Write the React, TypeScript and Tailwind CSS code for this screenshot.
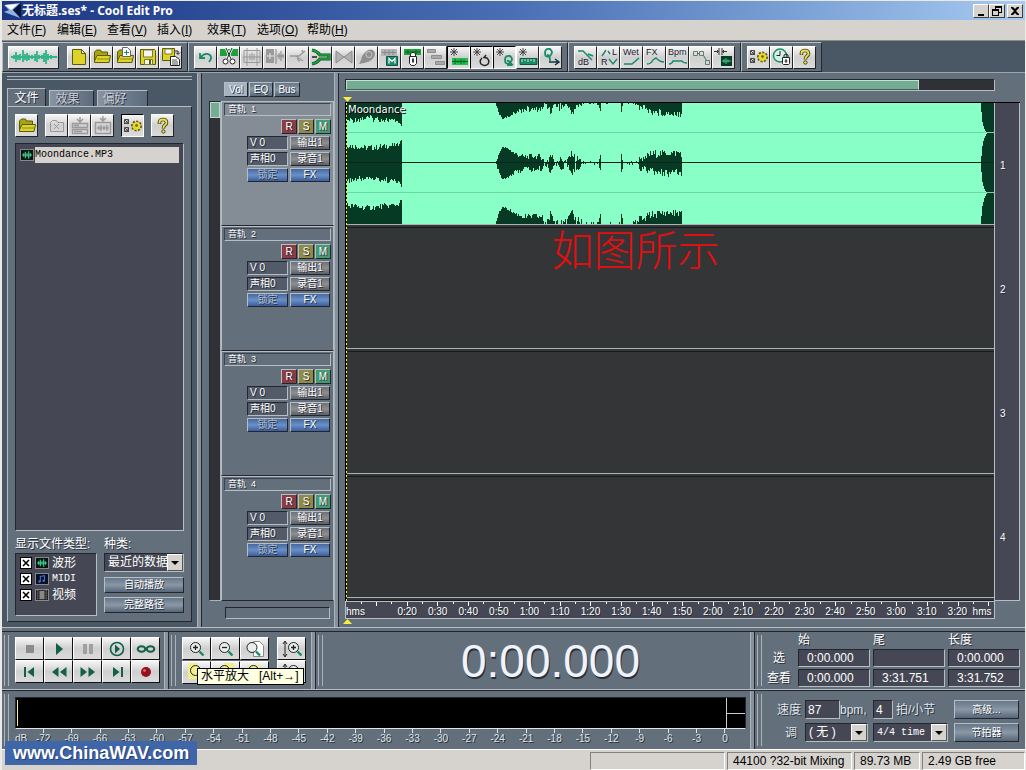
import React from "react";

const SANS = "font-['Liberation_Sans','Noto_Sans_CJK_SC',sans-serif]";
const MONO = "font-['Liberation_Mono','Noto_Sans_CJK_SC',monospace]";
const SHADOW = "[text-shadow:1px_1px_0_#2a2f3a]";
const SUNKEN = "border border-t-[#23262e] border-l-[#23262e] border-r-[#b4bec3] border-b-[#b4bec3]";
const RAISED = "border border-t-[#b4bec3] border-l-[#b4bec3] border-r-[#23262e] border-b-[#23262e]";
const FACE = "bg-linear-to-b from-[#f6f6f6] via-[#cfcfcf] to-[#dcdcdc]";
const STEEL = "bg-linear-to-b from-[#66788a] via-[#8a97a5] to-[#56677a]";

type Kids = { children?: React.ReactNode };

/* ---------- icons ---------- */

function Ico({ children, w = 20 }: Kids & { w?: number }) {
  return (
    <svg width={w} height="20" viewBox={`0 0 ${w} 20`} fill="none" stroke="#222" aria-hidden="true" className="block shrink-0">
      {children}
    </svg>
  );
}

const G = "#9a9a9a";
const T = "#178a68";

const Folder = () => (
  <>
    <path d="M2.500 14V5l2-2h4l1 2h6v3" fill="#a8a312" stroke="#5d5a0a" />
    <path d="M2.500 15.500V14L5 8.500h13.500l-1.500 7z" fill="#dcd42a" stroke="#5d5a0a" />
    <path d="M5 12h12" stroke="#8f8a18" />
  </>
);
const Floppy = () => (
  <>
    <path d="M2.500 2.500h14l1 1v14h-15z" fill="#dcd42a" stroke="#5d5a0a" />
    <path d="M5.500 3h9v7h-9zM6.500 12.500h8v5h-8z" fill="#f4f4f4" stroke="#807c20" />
    <path d="M12 13v4" stroke="#5d5a0a" strokeWidth="2" />
  </>
);
const Star = () => <path d="M5 1v8M1 5h8M2 2l6 6M8 2L2 8" stroke="#333" strokeWidth="0.9" />;
const Gear = () => (
  <>
    <path d="M1.500 3.500h4v4h-4zM1.500 11.500h4v4h-4zM2 4l3.500 3.500M5.500 4L2 7.500M2 12l3.500 3.500M5.500 12L2 15.500" stroke="#222" strokeWidth="0.8" />
    <circle cx="13.500" cy="10" r="4.500" fill="#e8d82c" stroke="#5d5a0a" strokeWidth="2" strokeDasharray="2 1.400" />
    <circle cx="13.500" cy="10" r="3.800" fill="#e8d82c" stroke="none" />
    <circle cx="13.500" cy="9.500" r="1.300" fill="#5d5a0a" stroke="none" />
  </>
);
const Help = () => (
  <>
    <path d="M6.500 8V6q0-2.500 3.500-2.500T13.500 6.500Q13.500 8 12 9t-1.600 3.500" stroke="#4a470c" strokeWidth="3.600" />
    <path d="M6.500 7.500V6q0-2.500 3.500-2.500T13.500 6.500Q13.500 8 12 9t-1.600 3" stroke="#e8df5a" strokeWidth="1.800" />
    <circle cx="10.400" cy="15.500" r="1.700" fill="#e8df5a" stroke="#4a470c" />
  </>
);
const MiniWave = () => (
  <path d="M1 6h12M3 4v4M5 2v8M7 4v4M9 1.500v9M11 4v4" stroke="#3fc98d" strokeWidth="1.400" />
);

const fileIcons = [
  ["新建", <path d="M3.500 2.500h9l4 4v11h-13zM12.500 2.500v4h4" fill="#dcd42a" stroke="#5d5a0a" />],
  ["打开", <Folder />],
  ["添加", <><Folder /><path d="M7.500 .5h5l3 3v6h-8z" fill="#fff" stroke="#666" /><path d="M11.500 3v5M9 5.500h5" stroke={T} /></>],
  ["保存", <Floppy />],
  ["全部保存", <><path d="M1.500 1.500h12v12h-12z" fill="#dcd42a" stroke="#5d5a0a" /><path d="M4 2h7v5H4z" fill="#fff" stroke="#807c20" /><path d="M14 4h3v3M15 5.500l2 2 2-2" /><path d="M9.500 9.500h5l4 3v6h-9z" fill="#fff" /><path d="M11 13h5M11 15h6M11 17h6" strokeWidth="0.8" /></>],
] as const;

const editIcons: readonly (readonly [string, React.ReactNode, boolean?])[] = [
  ["撤消", <path d="M4 6v5h5M4.500 10.500Q9 5 14 8q2.500 3-1 7" stroke={T} strokeWidth="1.800" />],
  ["剪切", <><path d="M1 2h18v7H1z" fill="#1fa03e" stroke="none" /><path d="M7 1l5 11M13 1L8 12" stroke="#fff" strokeWidth="2.600" /><path d="M7 1l5 11M13 1L8 12" /><circle cx="6.500" cy="14.500" r="2.500" fill="#fff" /><circle cx="13.500" cy="14.500" r="2.500" fill="#fff" /></>],
  ["裁剪", <path d="M2 3.500h16v12H2zM5 1v18M15 1v18M1 10h18M8 7v6M10 5.500v8M12 7v6" stroke={G} />],
  ["分割", <><path d="M1 2h8v14H1z" fill={G} stroke="none" /><path d="M3 9h6M5 6v6M11 2v15M12 9h7M14 6v6M16 4v10M18 7v4" stroke="#858585" /><path d="M2 9h7M5 6v6" stroke="#eee" /></>],
  ["合并", <path d="M2 9h9l6-5M8 9l7 5M10 9q-1 5 2 5M14 3l1 3" stroke={G} strokeWidth="1.500" />],
  ["混合", <><path d="M1 3q5 1 8 5h9v4H9q-3 4-8 5" stroke="#0c5e24" strokeWidth="3.200" /><path d="M1 3q5 1 8 5h9v4H9q-3 4-8 5" stroke="#1fa03e" strokeWidth="1.600" /><path d="M1 10h5" stroke="#222" strokeWidth="1.500" /></>],
  ["淡化", <path d="M2 4l8 6-8 6zM18 4l-8 6 8 6z" fill="#b0b0b0" stroke="#8c8c8c" />],
  ["标记", <><path d="M4 13l-2 4 5-1q10-2 11-9-1-6-7-4-6 4-7 10z" fill="#8f8f8f" stroke="none" /><circle cx="12" cy="7.500" r="3" stroke="#c5c5c5" /></>],
  ["静音", <><path d="M1 2h16v7H1z" fill="#b4b4b4" stroke="none" /><path d="M2 5.500h14M5 3v5M9 3v5M13 3v5" stroke="#888" /><path d="M6.500 9.500h11v9h-11z" fill="#1c8a6a" stroke="#0c5a42" /><path d="M9 16.500v-5l3 3 3-3v5" stroke="#fff" strokeWidth="1.200" /></>],
  ["锁定", <><path d="M1 2h17v6H1z" fill="#1fa03e" stroke="none" /><path d="M2 5h15M5 3v4M13 3v4" stroke="#0c5e24" /><path d="M7.500 10V7q2.500-3.500 5 0v3" fill="#fff" /><path d="M6.500 9.500h7v7l-2 2h-3l-2-2z" fill="#fff" /><path d="M10 11.500v4" strokeWidth="1.800" /></>],
  ["分组", <path d="M1.500 2.500h8v3h-8zM5.500 8.500h10v3h-10zM9.500 14.500h9v3h-9z" fill="#aaa" stroke="#8c8c8c" />],
  ["对齐波形", <><Star /><path d="M3 11h16v7H3z" fill="#1fc04e" stroke="none" /><path d="M3 14.500h16M6 12v5M9 13v3M12 12v5M15 12.500v4" stroke="#0c5e24" /></>, true],
  ["对齐循环", <><Star /><path d="M10 11q-3 3-1 6 4 3 7 0 2-3-1-6l-3-.5 2-2.500" strokeWidth="1.400" /></>, true],
  ["对齐标记", <><Star /><path d="M15 9q-5-1-5 4t5 3q4-4 0-7zM12 14q2-1 3 2l3 2M12 18h5" stroke={T} strokeWidth="1.800" /></>, true],
  ["对齐标尺", <><Star /><path d="M2 11.500h17v6H2z" fill="#1c8a6a" stroke="#0c5a42" /><path d="M4 12v3M7 12v2M10 12v3M13 12v2M16 12v3" stroke="#bff0d8" /></>],
  ["提示列表", <><path d="M9 2Q4 1 4 6t5 3q4-4 0-7zM6 8q3 0 3 6" stroke={T} strokeWidth="1.800" /><path d="M8 15h9M14 12l4 3-4 3" stroke="#134" strokeWidth="1.500" /></>],
];

const Lbl = ({ x, y, s = 9, children }: { x: number; y: number; s?: number; children: string }) => (
  <text x={x} y={y} fontSize={s} fill="#223" stroke="none" fontFamily="Liberation Sans, sans-serif">{children}</text>
);
const envIcons = [
  ["音量包络", <><Lbl x={2} y={18}>dB</Lbl><path d="M2 4h5l9 9M12 7l5 2" stroke={T} strokeWidth="1.400" /></>],
  ["声相包络", <><Lbl x={13} y={8} s={9}>L</Lbl><Lbl x={2} y={18} s={9}>R</Lbl><path d="M3 9l4-6M9 4l2 3M10 12l4 5 4-5" stroke={T} strokeWidth="1.400" /></>],
  ["湿干包络", <><Lbl x={1} y={8}>Wet</Lbl><path d="M2 17h8l7-6" stroke={T} strokeWidth="1.600" /></>],
  ["效果包络", <><Lbl x={1} y={8}>FX</Lbl><path d="M2 17q4 0 6-4l3-2q4 4 8 4" stroke={T} strokeWidth="1.400" /></>],
  ["速度包络", <><Lbl x={0} y={8} s={9}>Bpm</Lbl><path d="M1 17q3 0 4-3h9q1 2 5 2" stroke={T} strokeWidth="1.400" /></>],
  ["编辑包络", <><path d="M2.500 4.500h4v4h-4zM8.500 4.500h4v4h-4zM14.500 13.500h4v4h-4z" stroke="#6a7a6a" /><path d="M6.500 6.500h2M12.500 8.500l3 5" stroke={T} /></>],
  ["对齐", <><path d="M5 1v7M8 1v7M0 4.500h4M9 4.500h4M3 3l1.500 1.500L3 6M10 3L8.500 4.500 10 6" strokeWidth="0.9" /><path d="M7 9h11v10H7z" fill="#083a24" stroke="none" /><path d="M8 14h9M10 12v4M12 11v6M14 12.500v3" stroke="#3fc98d" /></>],
] as const;

const optionIcons = [
  ["选项", <Gear />],
  ["时钟", <><circle cx="8" cy="8.500" r="6.500" fill="#d8efe6" stroke={T} strokeWidth="1.400" /><path d="M8 4v4.500H4.500" /><path d="M12 10V8q2-2 4 0v2" /><path d="M10.500 10.500h7v6l-1 1h-5l-1-1z" fill="#fff" /><path d="M14 12v4M12.500 14h3" /></>],
  ["帮助", <Help />],
] as const;

/* ---------- controls ---------- */

function ToolButton({ label, down, wide, children }: Kids & { label: string; down?: boolean; wide?: boolean }) {
  return (
    <button
      type="button"
      aria-label={label}
      className={`flex h-[23px] items-center justify-center overflow-hidden ${FACE} ${wide ? "w-[51px]" : "w-[23px]"} ${
        down
          ? "border border-t-black border-l-black border-r-white border-b-white"
          : "border border-t-white border-l-white border-r-[#222] border-b-[#222]"
      }`}
    >
      <Ico w={wide ? 48 : 20}>{children}</Ico>
    </button>
  );
}

function ToolGroup({ children }: Kids) {
  return <div className={`flex h-[30px] items-center gap-2 bg-[#646f7c] px-[5px] ${RAISED}`}>{children}</div>;
}

function Grip() {
  return <div className="my-[3px] ml-0.5 w-[5px] border-x border-[#a9b3ba]" />;
}

function Divider() {
  return <div className="w-[5px] shrink-0 border-x border-l-[#a9b3ba] border-r-[#23262e] bg-[#86919b]" />;
}

function DropDown({ label, options, width, text }: { label: string; options: string[]; width: string; text: string }) {
  return (
    <div className={`grid h-[19px] bg-[#454854] ${SUNKEN} ${width}`}>
      <select aria-label={label} className={`col-start-1 row-start-1 w-full min-w-0 appearance-none overflow-hidden pl-[3px] text-xs leading-[17px] whitespace-nowrap text-white ${text}`}>
        {options.map((o) => <option key={o}>{o}</option>)}
      </select>
      <span className="pointer-events-none col-start-1 row-start-1 flex w-4 items-center justify-center justify-self-end border border-white border-r-[#555] border-b-[#555] bg-[#d6d3ce]">
        <svg width="8" height="4" viewBox="0 0 8 4" aria-hidden="true"><path d="M0 0h8L4 4z" fill="#000" /></svg>
      </span>
    </div>
  );
}

/* ---------- waveform ---------- */

type Point = [number, number, number];
const INTRO: Point[] = [[0, 17, 6], [20, 14, 6], [40, 16, 6], [52, 18, 3], [56, 25, 1]];
const MIDDLE: Point[] = [
  [149, 0, 1], [151, 4, 4], [153, 10, 3], [156, 16, 1], [163, 13, 3], [168, 9, 4], [178, 5, 6], [188, 6, 6], [196, 5, 6],
  [198, 0, 4], [202, 2, 9], [204, 7, 8], [207, 3, 7], [209, 0, 3], [211, 2, 9], [218, 2, 8], [220, 0, 2], [222, 4, 6],
  [226, 9, 7], [229, 2, 10], [233, 2, 8], [236, 0, 7], [238, -1, 4], [252, -2, 6], [254, 8, 2], [255, -2, 4], [262, -4, 8],
  [274, -4, 8], [275, 9, 2], [277, -2, 5], [290, -1, 6], [294, 5, 6], [298, 2, 5], [302, 7, 8], [310, 8, 8], [320, 9, 7], [336, 9, 8],
];

function noise(n: number) {
  const v = Math.sin(n * 12.9898) * 43758.5453;
  return v - Math.floor(v);
}

function strip(points: Point[], base: number, dir: number, seed: number) {
  let d = "";
  for (let i = 0; i < points.length - 1; i++) {
    const [x0, h0, j0] = points[i];
    const [x1, h1, j1] = points[i + 1];
    for (let x = x0; x < x1; x++) {
      const t = (x - x0) / (x1 - x0);
      const amp = h0 + (h1 - h0) * t + (j0 + (j1 - j0) * t) * (noise(x + seed) - 0.35);
      const h = Math.round(Math.max(0, Math.min(26, amp)));
      if (h > 0) d += `M${x} ${base}h1v${h * dir}h-1z`;
    }
  }
  return d;
}

const WAVE = [
  [0, 1, 3], [60, -1, 71], [60, 1, 213], [120, -1, 407],
].map(([base, dir, seed]) => strip(INTRO, base, dir, seed) + strip(MIDDLE, base, dir, seed)).join("");

function Waveform() {
  return (
    <svg className="block h-full w-full" viewBox="0 0 648 120" preserveAspectRatio="none" shapeRendering="crispEdges" role="img" aria-label="Moondance">
      <rect width="648" height="120" fill="#87ffc7" />
      <path d={WAVE} fill="#073a24" />
      {[0, 60].map((y) => (
        <path key={y} transform={`translate(0 ${y})`} fill="#073a24" d="M635 0H648V60H635L636 45L638 36L641 30L638 25L636 17Z" />
      ))}
      <path d="M0 29.500H648M0 89.500H648" stroke="#6fd6a5" />
      <path d="M0 59.500H648" stroke="#10231b" strokeWidth="1" />
    </svg>
  );
}

/* ---------- panels ---------- */

function TitleBar() {
  return (
    <header className="flex h-[19px] items-center bg-linear-to-r from-[#1c3684] via-[#4a6fb4] to-[#a6caf0] pr-0.5">
      <svg width="17" height="17" viewBox="0 0 17 17" className="ml-0.5" aria-hidden="true">
        <path d="M0 3L16 1 9 8l7 8L0 10l5-2z" fill="#8fb4e4" />
        <path d="M1 3L14 2 7 8z" fill="#fff" />
        <path d="M9 8l8-7v15z" fill="#0a1438" />
      </svg>
      <h1 className="flex-1 pl-px text-xs leading-4 font-bold text-white font-['Noto_Sans','Noto_Sans_CJK_SC',sans-serif]">无标题.ses* - Cool Edit Pro</h1>
      {[
        ["最小化", "M3 9h6v2H3z", ""],
        ["还原", "M4 1h7v7H8v3H1V4h3zM5 3v1h3v3h2V3zM2 6v4h5V6z", ""],
        ["关闭", "M2 2h2l2 2 2-2h2v1L7.500 5.500 7 6l3 3v1H8L6 8l-2 2H2V9l3-3-3-3z", "ml-0.5"],
      ].map(([n, d, extra]) => (
        <button key={n} type="button" aria-label={n} className={`flex h-3.5 w-4 items-center justify-center border border-white border-r-[#404040] border-b-[#404040] bg-[#d6d3ce] ${extra}`}>
          <svg width="12" height="12" viewBox="0 0 12 12" aria-hidden="true"><path d={d} fill="#000" fillRule="evenodd" /></svg>
        </button>
      ))}
    </header>
  );
}

function MenuBar() {
  const items = [["文件", "F"], ["编辑", "E"], ["查看", "V"], ["插入", "I"], ["效果", "T"], ["选项", "O"], ["帮助", "H"]];
  return (
    <nav className="flex h-[21px] items-center border-b border-[#8a8a86] bg-[#d6d3ce] text-xs text-black">
      {items.map(([t, k]) => (
        <button key={k} type="button" className="w-[50px] pl-[5px] text-left whitespace-nowrap">{t}(<u>{k}</u>)</button>
      ))}
    </nav>
  );
}

function Toolbar() {
  return (
    <div className="flex h-8 items-start border-b border-[#9aa5ad] bg-[#4a5764] pt-px">
      <ToolGroup>
        <ToolButton label="波形视图" wide>
          <path d="M1 10h46M4 8v4M6 5v10M8 8v5M10 7v6M13 3v12M15 7v6M17 6v8M19 8v5M22 8v4M25 7v7M27 4v11M29 8v4M32 8v4M34 6v9M36 3v14M38 7v6M41 8v4" stroke="#2fb586" strokeWidth="1.800" />
        </ToolButton>
        <div className="flex">{fileIcons.map(([n, i]) => <ToolButton key={n} label={n}>{i}</ToolButton>)}</div>
      </ToolGroup>
      <ToolGroup>
        <div className="flex">{editIcons.map(([n, i, d]) => <ToolButton key={n} label={n} down={d}>{i}</ToolButton>)}</div>
      </ToolGroup>
      <ToolGroup>
        <div className="flex">{envIcons.map(([n, i]) => <ToolButton key={n} label={n}>{i}</ToolButton>)}</div>
      </ToolGroup>
      <ToolGroup>
        <div className="flex">{optionIcons.map(([n, i]) => <ToolButton key={n} label={n}>{i}</ToolButton>)}</div>
      </ToolGroup>
    </div>
  );
}

const WaveBadge = () => (
  <svg width="14" height="12" viewBox="0 0 14 12" className="shrink-0 border border-[#888] bg-[#06170f]" aria-hidden="true"><MiniWave /></svg>
);

function FilePanel() {
  const kinds: [string, React.ReactNode][] = [
    ["波形", <WaveBadge />],
    ["MIDI", <svg width="14" height="12" viewBox="0 0 14 12" className="border border-[#888] bg-[#0a0f22]" aria-hidden="true"><path d="M5 9V3l5-1v6" stroke="#3f6fd0" fill="none" strokeWidth="1.300" /><circle cx="4" cy="9" r="1.500" fill="#3f6fd0" /><circle cx="9" cy="8" r="1.500" fill="#3f6fd0" /></svg>],
    ["视频", <svg width="14" height="12" viewBox="0 0 14 12" className="border border-[#888] bg-[#222]" aria-hidden="true"><path d="M4 1h6v10H4z" fill="#888" /><path d="M2 0v12M12 0v12" stroke="#bbb" strokeDasharray="1 1" /></svg>],
  ];
  return (
    <aside className="flex w-[195px] shrink-0 flex-col bg-[#4a5764] pt-[3px] pr-[5px] pb-[5px] pl-[5px]">
      <div className="mb-2 h-1 border-y border-[#a9b3ba]" />
      <div className="flex items-end gap-[3px] text-xs leading-4">
        <button type="button" className={`h-[18px] w-[39px] border border-b-0 border-[#b4bec3] border-r-[#23262e] bg-[#646f7c] text-white ${SHADOW}`}>文件</button>
        <button type="button" className={`h-4 w-[45px] border border-b-0 border-[#b4bec3] border-r-[#23262e] bg-linear-to-r from-[#8793a3] to-[#5d6b7c] pr-2 text-[#c9d0d8] ${SHADOW}`}>效果</button>
        <button type="button" className={`h-4 w-[51px] border border-b-0 border-[#b4bec3] border-r-[#23262e] bg-linear-to-r from-[#8793a3] to-[#5d6b7c] pr-4 text-[#c9d0d8] ${SHADOW}`}>偏好</button>
      </div>
      <div className={`flex flex-1 flex-col bg-[#646f7c] px-[7px] pt-[7px] pb-[5px] ${RAISED}`}>
        <div className="flex gap-[7px]">
          <ToolButton label="打开文件"><Folder /></ToolButton>
          <div className="flex">
            <ToolButton label="关闭文件"><path d="M3.500 15.500v-9l2-2h4l1 2h6v9zM7 8l5 5M12 8l-5 5" stroke={G} /></ToolButton>
            <ToolButton label="插入音轨"><path d="M2.500 7.500h15v4h-15zM2.500 13.500h15v4h-15zM10 1v4M7 3l3 3 3-3M4 9.500h5M4 15.500h8" stroke={G} strokeWidth="1.400" /></ToolButton>
            <ToolButton label="插入波形"><path d="M2.500 6.500h15v11h-15zM10 0v4M7 2l3 3 3-3M4 12h12M6 10v4M8 9v6M11 10v4M14 9v6" stroke={G} strokeWidth="1.400" /></ToolButton>
          </div>
          <ToolButton label="显示选项" down><Gear /></ToolButton>
          <ToolButton label="帮助"><Help /></ToolButton>
        </div>
        <ul className={`mt-[6px] flex-1 bg-[#454854] px-1 py-[3px] ${SUNKEN}`}>
          <li className="flex items-center gap-px">
            <WaveBadge />
            <span className={`flex-1 bg-[#d6d3ce] text-[10px] leading-4 text-black ${MONO}`}>Moondance.MP3</span>
          </li>
        </ul>
        <div className="mt-1 flex gap-[7px]">
          <fieldset className="w-[82px]">
            <legend className={`text-xs leading-[18px] whitespace-nowrap text-white ${SHADOW}`}>显示文件类型:</legend>
            <div className={`h-[63px] bg-[#454854] px-1 pt-px ${SUNKEN}`}>
              {kinds.map(([n, icon]) => (
                <label key={n} className={`flex h-4 items-center gap-[3px] leading-4 text-white ${n === "MIDI" ? `text-[10px] ${MONO}` : "text-xs"}`}>
                  <span className="grid size-3 place-items-center">
                    <input type="checkbox" defaultChecked className="peer col-start-1 row-start-1 size-3 appearance-none border border-black bg-white" />
                    <svg width="8" height="8" viewBox="0 0 8 8" className="pointer-events-none invisible col-start-1 row-start-1 peer-checked:visible" aria-hidden="true"><path d="M1 1l6 6M7 1L1 7" stroke="#000" strokeWidth="1.600" /></svg>
                  </span>
                  {icon}
                  {n}
                </label>
              ))}
            </div>
          </fieldset>
          <div className="flex w-20 flex-col">
            <span className={`text-xs leading-[18px] text-white ${SHADOW}`}>种类:</span>
            <DropDown label="种类" options={["最近的数据"]} width="w-full" text="" />
            <button type="button" className={`mt-[5px] h-4 text-[10px] leading-3 text-white ${STEEL} ${RAISED} ${SHADOW}`}>自动播放</button>
            <button type="button" className={`mt-1 h-4 text-[10px] leading-3 text-white ${STEEL} ${RAISED} ${SHADOW}`}>完整路径</button>
          </div>
        </div>
      </div>
    </aside>
  );
}

function TrackStrip({ n, active }: { n: number; active?: boolean }) {
  const cell = `h-3.5 text-[10px] leading-3 ${SHADOW}`;
  const gray = "bg-linear-to-b from-[#6d7077] via-[#8f8f92] to-[#5d5f66]";
  const blue = "bg-linear-to-b from-[#4668a0] via-[#6a90c8] to-[#3c5f9a]";
  return (
    <section className={`min-h-0 flex-1 border-t border-l border-[#b4bec3] border-r border-b border-b-[#23262e] px-0.5 pt-px ${active ? "bg-[#848c96]" : "bg-[#646f7c]"}`}>
      <h2 className={`h-[13px] border border-[#3a4350] border-r-[#b4bec3] border-b-[#b4bec3] pl-[3px] text-[9px] leading-[11px] whitespace-pre text-white ${SHADOW}`}>音轨  {n}</h2>
      <div className="mt-[3px] flex justify-end gap-px">
        {[["R", "bg-[#8c3c44]"], ["S", "bg-[#8d8b47]"], ["M", "bg-[#459a72]"]].map(([t, c]) => (
          <button key={t} type="button" className={`h-[15px] w-4 text-[10px] leading-3 text-white ${c} ${RAISED} ${SHADOW}`}>{t}</button>
        ))}
      </div>
      <div className="mt-0.5 ml-auto grid w-[84px] grid-cols-[41px_40px] gap-x-0.5 gap-y-0.5">
        <button type="button" className={`${cell} ${SUNKEN} bg-[#535a69] pl-0.5 text-left text-white`}>V 0</button>
        <button type="button" className={`${cell} ${RAISED} ${gray} text-white`}>输出1</button>
        <button type="button" className={`${cell} ${SUNKEN} bg-[#535a69] pl-0.5 text-left text-white`}>声相0</button>
        <button type="button" className={`${cell} ${RAISED} ${gray} text-white`}>录音1</button>
        <button type="button" className={`${cell} ${RAISED} ${blue} text-[#a9bcd8]`}>锁定</button>
        <button type="button" className={`${cell} ${RAISED} ${blue} text-white`}>FX</button>
      </div>
    </section>
  );
}

function Mixer() {
  return (
    <div className="flex w-[132px] shrink-0 flex-col pt-[9px]">
      <div className="flex h-[15px] gap-px pl-[22px] text-[10px] leading-3 text-white">
        <button type="button" className={`w-6 bg-[#a4b3c4] ${RAISED} ${SHADOW}`}>Vol</button>
        <button type="button" className={`w-6 ${STEEL} ${RAISED} ${SHADOW}`}>EQ</button>
        <button type="button" className={`w-[26px] ${STEEL} ${RAISED} ${SHADOW}`}>Bus</button>
      </div>
      <div className="mt-1 flex flex-1">
        <div className="ml-[7px] w-3 border border-[#23262e] border-r-[#a9b3ba] border-b-[#a9b3ba] bg-[#2f3137]">
          <div className="h-4 border border-[#c3d9cf] bg-[#75ad94]" />
        </div>
        <div className="flex flex-1 flex-col">
          <TrackStrip n={1} active />
          <TrackStrip n={2} />
          <TrackStrip n={3} />
          <TrackStrip n={4} />
        </div>
      </div>
      <div className="flex h-[26px] items-start pt-[6px] pr-1 pl-[23px]">
        <div className={`h-3 flex-1 ${SUNKEN}`} />
      </div>
    </div>
  );
}

function Tri({ up }: { up?: boolean }) {
  return (
    <svg width="9" height="5" viewBox="0 0 9 5" className="block" aria-hidden="true">
      <path d={up ? "M0 5h9L4.500 0z" : "M0 0h9L4.500 5z"} fill="#f7ef3a" />
    </svg>
  );
}

function Ruler() {
  const marks = Array.from({ length: 19 }, (_, i) => (i + 2) * 10);
  const ticks = Array.from({ length: 42 }, (_, i) => `M${(i + 1) * 50} 0v${i % 2 ? 4 : 2}`).join("");
  return (
    <div className="border border-[#b4bec3] bg-[#454854]">
      <svg className="block h-1 w-full" viewBox="0 0 2117 4" preserveAspectRatio="none" shapeRendering="crispEdges" aria-hidden="true">
        <path d={ticks} stroke="#fff" strokeWidth="1" vectorEffect="non-scaling-stroke" />
      </svg>
      <div className={`grid h-3 grid-cols-[15fr_repeat(19,10fr)_7fr] text-center text-[10px] leading-[11px] whitespace-nowrap text-white ${SHADOW}`}>
        <span className="min-w-0 text-left">hms</span>
        {marks.map((s) => <span key={s} className="min-w-0">{`${Math.floor(s / 60)}:${String(s % 60).padStart(2, "0")}`}</span>)}
        <span className="min-w-0 text-left">hms</span>
      </div>
    </div>
  );
}

function Session() {
  return (
    <main className="flex min-w-0 flex-1 flex-col pt-[6px] pr-[5px] pl-[6px]">
      <div className={`mr-[25px] flex h-3 bg-[#2f3137] ${SUNKEN}`}>
        <div className="w-[88.5%] border border-[#c3e0d3] border-b-[#3f5f52] bg-[#75ad94]" />
      </div>
      <div className="-ml-0.5 flex h-[11px] items-end"><Tri /></div>
      <div className="flex flex-1 border-t border-black">
        <div className="relative flex flex-1 flex-col border-l border-black bg-[#333537]">
          {[1, 2, 3, 4].map((n) => (
            <div key={n} className="flex flex-1 flex-col border-b border-[#1a1b1d] pb-0.5">
              <div className="relative flex-1 border-b border-[#a9b3ba]">
                {n === 1 && (
                  <div className="absolute inset-0">
                    <Waveform />
                    <span className="absolute top-px left-0.5 text-[10px] leading-3 text-white font-['DejaVu_Sans',sans-serif] [text-shadow:1px_1px_0_#000]">Moondance</span>
                  </div>
                )}
                {n === 2 && (
                  <p className="absolute top-0 left-[31.7%] text-[42px] leading-[48px] font-light text-[#e01010]">如图所示</p>
                )}
              </div>
            </div>
          ))}
          <div className="absolute inset-y-0 left-0 w-px bg-[repeating-linear-gradient(to_bottom,#f7ef3a_0_2px,#222_2px_4px)]" />
        </div>
        <div className={`flex w-[26px] flex-col border-x border-[#b4bec3] border-b bg-[#454854] text-[10px] text-white ${SHADOW}`}>
          {[1, 2, 3, 4].map((n) => <span key={n} className="flex flex-1 items-center pl-[5px]">{n}</span>)}
        </div>
      </div>
      <div className="mr-[25px]"><Ruler /></div>
      <div className="-ml-0.5 h-2"><Tri up /></div>
    </main>
  );
}

function Key({ label, children }: Kids & { label: string }) {
  return (
    <button type="button" aria-label={label} className={`flex h-[23px] w-[29px] items-center justify-center overflow-hidden border border-t-white border-l-white border-r-[#111] border-b-[#111] ${FACE}`}>
      <Ico>{children}</Ico>
    </button>
  );
}

const D = "#12604a";
const transport: [string, React.ReactNode][] = [
  ["停止", <path d="M6 6h8v8H6z" fill="#8c8c8c" stroke="none" />],
  ["播放", <path d="M7 4l7 6-7 6z" fill={D} stroke="none" />],
  ["暂停", <path d="M5 5h4v10H5zM11 5h4v10h-4z" fill="#a0a0a0" stroke="none" />],
  ["播放到尾", <><circle cx="10" cy="10" r="6.500" stroke={D} strokeWidth="1.600" /><path d="M8 5.500l5 4.500-5 4.500z" fill={D} stroke="none" /></>],
  ["循环播放", <><ellipse cx="5.500" cy="10" rx="3.800" ry="2.800" stroke={D} strokeWidth="2" /><ellipse cx="14.500" cy="10" rx="3.800" ry="2.800" stroke={D} strokeWidth="2" /></>],
  ["到开头", <path d="M4 5h2v10H4zM14 5v10L7.500 10z" fill={D} stroke="none" />],
  ["倒放", <path d="M9.500 5v10L3 10zM17.500 5v10L11 10z" fill={D} stroke="none" />],
  ["快进", <path d="M2.500 5v10L9 10zM10.500 5v10L17 10z" fill={D} stroke="none" />],
  ["到结尾", <path d="M6 5v10l6.500-5zM14 5h2v10h-2z" fill={D} stroke="none" />],
  ["录音", <><circle cx="10" cy="10" r="5" fill="#97101c" stroke="none" /><circle cx="8.500" cy="8.500" r="1.300" fill="#e07a80" stroke="none" /></>],
];

const Lens = ({ sign, x = 8.500, tint }: { sign?: string; x?: number; tint?: string }) => (
  <>
    <path d={`M${x + 4} 12.500l4 4`} stroke={T} strokeWidth="2.400" />
    <circle cx={x} cy="8.500" r="5" stroke="#222" fill={tint ?? "#e8eeee"} />
    {sign && <path d={sign} stroke="#222" strokeWidth="1.300" />}
  </>
);

function ZoomPanel() {
  return (
    <div className="relative flex gap-2 py-[5px] pr-[5px] pl-[6px]">
      <div className="grid grid-cols-3">
        <Key label="水平放大"><Lens sign="M6 8.500h5M8.500 6v5" /></Key>
        <Key label="水平缩小"><Lens sign="M6 8.500h5" /></Key>
        <Key label="全部显示"><path d="M8.500 2.500h6l4 4v11h-10z" fill="#fff" stroke="#888" /><Lens x={7} /></Key>
        <Key label="缩放到选区"><path d="M1 1h10v16H1z" fill="#f3ee8c" stroke="none" /><Lens tint="#f3ee8c" /></Key>
        <Key label="选区左侧"><path d="M8 1h10v16H8z" fill="#f3ee8c" stroke="none" /><Lens tint="#f3ee8c" /></Key>
        <Key label="选区右侧"><path d="M3 3h12v15H3z" fill="#f3ee8c" stroke="none" /><Lens tint="#f3ee8c" /></Key>
      </div>
      <div className="flex flex-col">
        <Key label="垂直放大"><path d="M3 3v14M1 5l2-3 2 3M1 15l2 3 2-3" /><Lens x={11.500} sign="M9 8.500h5M11.500 6v5" /></Key>
        <Key label="垂直缩小"><path d="M3 3v14M1 5l2-3 2 3M1 15l2 3 2-3" /><Lens x={11.500} sign="M9 8.500h5" /></Key>
      </div>
      <div role="tooltip" className="absolute top-9 left-[21px] z-10 h-[17px] w-[107px] border border-black bg-[#ffffe1] px-[3px] text-xs leading-[15px] whitespace-pre text-black">水平放大   [Alt+→]</div>
    </div>
  );
}

function TimeBoxes() {
  const box = `h-[18px] min-w-0 bg-[#454854] pl-2 text-xs text-white ${SUNKEN}`;
  return (
    <div className={`grid flex-1 grid-cols-[32px_72px_72px_72px] content-start items-center justify-end gap-x-[3px] gap-y-0.5 pt-px pr-[5px] text-xs leading-[14px] text-white ${SHADOW}`}>
      <span />
      <span>始</span>
      <span>尾</span>
      <span>长度</span>
      <span className="text-center">选</span>
      <input aria-label="选 始" defaultValue="0:00.000" className={box} />
      <input aria-label="选 尾" defaultValue="" className={box} />
      <input aria-label="选 长度" defaultValue="0:00.000" className={box} />
      <span className="pr-1 text-right">查看</span>
      <input aria-label="查看 始" defaultValue="0:00.000" className={box} />
      <input aria-label="查看 尾" defaultValue="3:31.751" className={box} />
      <input aria-label="查看 长度" defaultValue="3:31.752" className={box} />
    </div>
  );
}

function TransportRow() {
  return (
    <div className="flex h-[58px] border-b border-[#b4bec3] bg-[#646f7c]">
      <Grip />
      <div className="grid grid-cols-5 content-start py-[5px] pr-1 pl-[6px]">
        {transport.map(([n, i]) => <Key key={n} label={n}>{i}</Key>)}
      </div>
      <Divider />
      <Grip />
      <ZoomPanel />
      <Divider />
      <Grip />
      <div className="flex flex-1 items-center justify-center pl-7">
        <output className="text-[46px] leading-[48px] text-[#f0f4fa] [text-shadow:1px_2px_0_#2a2f3a]">0:00.000</output>
      </div>
      <Divider />
      <div className="flex w-[270px]">
        <Grip />
        <TimeBoxes />
      </div>
    </div>
  );
}

function Tempo() {
  const box = `h-[19px] bg-[#454854] pl-0.5 text-xs text-white ${SUNKEN}`;
  const btn = `h-[19px] w-[65px] text-[10px] leading-3 text-white ${STEEL} ${RAISED} ${SHADOW}`;
  return (
    <div className={`grid flex-1 grid-cols-[36px_68px_81px_65px] content-start items-center justify-end gap-y-1 pt-[9px] pr-[6px] text-xs leading-[18px] whitespace-nowrap text-[#dfe5ea] ${SHADOW}`}>
      <label htmlFor="tempo" className="pr-1 text-right">速度</label>
      <div className="flex items-center">
        <input id="tempo" defaultValue="87" className={`w-[35px] ${box}`} />
        <span>bpm,</span>
      </div>
      <div className="flex items-center gap-[3px]">
        <input id="beats" defaultValue="4" className={`w-5 ${box}`} />
        <label htmlFor="beats">拍/小节</label>
      </div>
      <button type="button" className={btn}>高级...</button>
      <span className="pr-2 text-right">调</span>
      <DropDown label="调" options={["( 无 )"]} width="w-[63px]" text="" />
      <DropDown label="拍号" options={["4/4 time"]} width="w-[75px]" text={`text-[10px] ${MONO}`} />
      <button type="button" className={btn}>节拍器</button>
    </div>
  );
}

function MeterRow() {
  const db = Array.from({ length: 25 }, (_, i) => -72 + i * 3);
  return (
    <div className="flex h-[59px] border-t border-[#23262e] bg-[#646f7c]">
      <Grip />
      <div className="flex flex-1 flex-col pt-[6px] pr-1 pl-[6px]">
        <div className="flex h-8 border border-[#23262e] border-b-[#dfe5ea] bg-black">
          <div className="my-0.5 ml-px w-px bg-[#f3ee8c]" />
          <div className="flex-1" />
          <div className="flex w-[19px] flex-col border-l border-[#c5ccd2]">
            <div className="flex-1 border-b border-[#c5ccd2]" />
            <div className="flex-1" />
          </div>
        </div>
        <div className={`flex pr-[7px] text-center text-[10px] leading-[11px] text-[#dfe5ea] ${SHADOW}`}>
          <span className="w-3.5 pt-1 text-left">dB</span>
          {db.map((v) => (
            <span key={v} className="flex min-w-0 flex-1 flex-col items-center">
              <i className="h-1 w-px bg-[#dfe5ea]" />
              {v}
            </span>
          ))}
        </div>
      </div>
      <Divider />
      <div className="flex w-[270px]">
        <Grip />
        <Tempo />
      </div>
    </div>
  );
}

function StatusBar() {
  const cell = "flex items-center border border-[#808080] border-r-white border-b-white pl-[5px] whitespace-nowrap";
  return (
    <footer className="relative flex h-[21px] justify-end gap-0.5 border-t border-white bg-[#d6d3ce] pt-0.5 text-xs leading-4 text-black">
      <div className={`w-[135px] ${cell}`} />
      <div className={`w-[125px] ${cell}`}>44100 ?32-bit Mixing</div>
      <div className={`w-[66px] ${cell}`}>89.73 MB</div>
      <div className={`w-[103px] ${cell}`}>2.49 GB free</div>
      <a href="#home" className="absolute -top-[9px] left-[3px] z-10 h-6 bg-[#3f66a8] px-2 text-lg leading-6 font-bold text-white [text-shadow:1px_1px_1px_#1c3a78]">www.ChinaWAV.com</a>
    </footer>
  );
}

export default function App() {
  return (
    <div className={`flex min-h-screen flex-col border-t border-r border-l-2 border-[#eceae6] bg-[#646f7c] ${SANS}`}>
      <TitleBar />
      <MenuBar />
      <Toolbar />
      <div className="flex flex-1">
        <FilePanel />
        <Divider />
        <Mixer />
        <Divider />
        <Session />
      </div>
      <div className="h-[5px] border-t border-b border-t-[#b4bec3] border-b-[#23262e]" />
      <TransportRow />
      <MeterRow />
      <StatusBar />
    </div>
  );
}
